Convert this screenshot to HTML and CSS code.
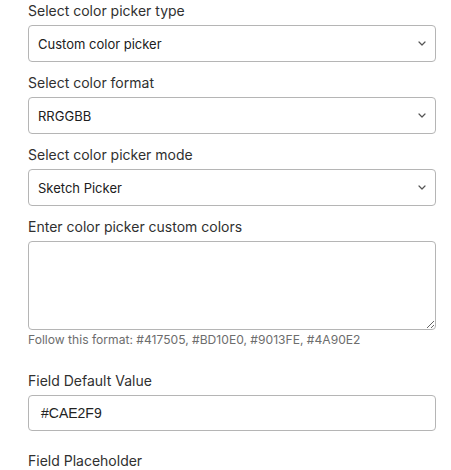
FILE: index.html
```html
<!DOCTYPE html>
<html>
<head>
<meta charset="utf-8">
<link rel="stylesheet" href="styles.css">
</head>
<body>
<div class="form">
  <div class="field">
    <label class="label">Select color picker type</label>
    <div class="select"><span>Custom color picker</span><svg class="chev" viewBox="0 0 8 5" width="8" height="5"><path d="M1 1 L4 4 L7 1" fill="none" stroke="#555" stroke-width="1.2" stroke-linecap="round" stroke-linejoin="round"/></svg></div>
  </div>
  <div class="field">
    <label class="label">Select color format</label>
    <div class="select"><span>RRGGBB</span><svg class="chev" viewBox="0 0 8 5" width="8" height="5"><path d="M1 1 L4 4 L7 1" fill="none" stroke="#555" stroke-width="1.2" stroke-linecap="round" stroke-linejoin="round"/></svg></div>
  </div>
  <div class="field">
    <label class="label">Select color picker mode</label>
    <div class="select"><span>Sketch Picker</span><svg class="chev" viewBox="0 0 8 5" width="8" height="5"><path d="M1 1 L4 4 L7 1" fill="none" stroke="#555" stroke-width="1.2" stroke-linecap="round" stroke-linejoin="round"/></svg></div>
  </div>
  <div class="field field-area">
    <label class="label">Enter color picker custom colors</label>
    <textarea class="area"></textarea>
    <div class="help">Follow this format: #417505, #BD10E0, #9013FE, #4A90E2</div>
  </div>
  <div class="field field-input">
    <label class="label">Field Default Value</label>
    <div class="input">#CAE2F9</div>
  </div>
  <div class="field">
    <label class="label">Field Placeholder</label>
  </div>
</div>
</body>
</html>
```
FILE: styles.css
```css
* { box-sizing: border-box; }
html, body { margin: 0; padding: 0; background: #fff; }
body { font-family: Inter, "Noto Sans", sans-serif; color: #303030; }
.form { padding: 1px 15px 0 28px; width: 451px; }
.field { display: flex; flex-direction: column; margin-bottom: 11px; }
.field-area { margin-bottom: 22px; }
.field-input { margin-bottom: 20px; }
.label { display: block; font-size: 14px; line-height: 20px; margin-bottom: 4px; color: #303030; }
.select {
  height: 37px; border: 1px solid #b5b5b5; border-radius: 4px;
  display: flex; align-items: center; justify-content: space-between;
  padding: 0 9px 0 9px; font-size: 13px; color: #202020;
}
.chev { display: block; }
.area {
  display: block; height: 89px; width: 408px; border: 1px solid #b5b5b5;
  border-radius: 4px; resize: vertical; margin: 0; padding: 6px 9px;
  font: 13px Inter, sans-serif;
}
.help { font-size: 12.1px; line-height: 18px; color: #6d6d6d; margin-top: 1px; }
.input {
  height: 36px; border: 1px solid #b5b5b5; border-radius: 4px;
  display: flex; align-items: center; padding: 0 12px;
  font-family: "Liberation Sans", Arial, sans-serif; font-size: 14px; color: #222;
}
```
